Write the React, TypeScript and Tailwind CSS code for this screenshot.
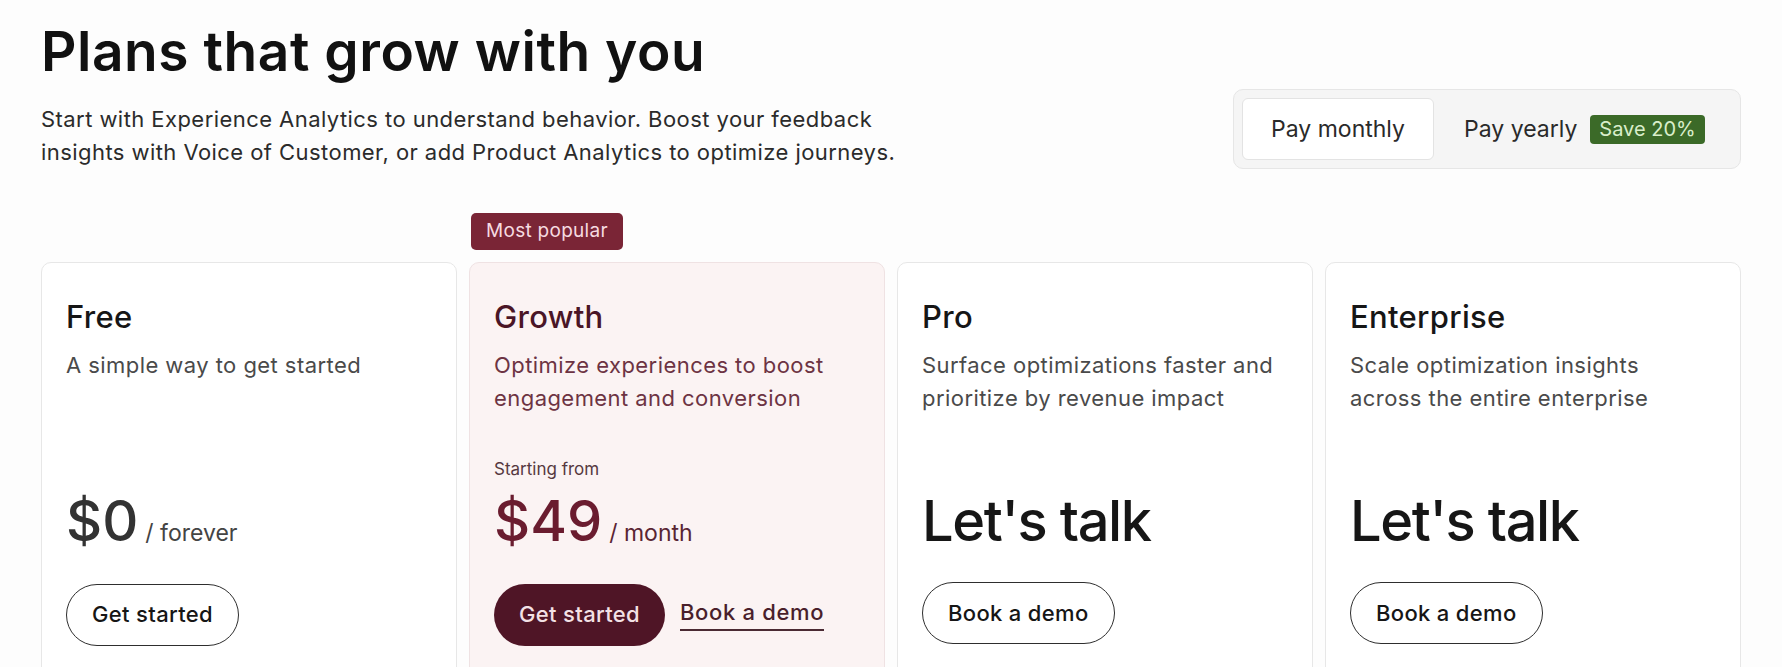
import React from "react";

type Plan = {
  name: string;
  desc: string[];
  starting?: string;
  price: string;
  unit?: string;
  highlight?: boolean;
  primary: string;
  primaryFilled?: boolean;
  link?: string;
};

const plans: Plan[] = [
  {
    name: "Free",
    desc: ["A simple way to get started"],
    price: "$0",
    unit: "/ forever",
    primary: "Get started",
  },
  {
    name: "Growth",
    desc: ["Optimize experiences to boost", "engagement and conversion"],
    starting: "Starting from",
    price: "$49",
    unit: "/ month",
    highlight: true,
    primary: "Get started",
    primaryFilled: true,
    link: "Book a demo",
  },
  {
    name: "Pro",
    desc: ["Surface optimizations faster and", "prioritize by revenue impact"],
    price: "Let's talk",
    primary: "Book a demo",
  },
  {
    name: "Enterprise",
    desc: ["Scale optimization insights", "across the entire enterprise"],
    price: "Let's talk",
    primary: "Book a demo",
  },
];

function PlanCard({ plan }: { plan: Plan }) {
  const hl = plan.highlight;
  return (
    <div className="flex flex-col">
      <div className="mb-3 h-[37px]">
        {hl && (
          <span className="ml-[2px] inline-flex h-[37px] items-center rounded-[5px] bg-[#7a2536] px-[15px] text-[19px] tracking-[0.015em] text-[#f6dbe0]">
            Most popular
          </span>
        )}
      </div>
      <div
        className={
          "min-h-[520px] rounded-[10px] border px-6 pt-[36px] pb-10 " +
          (hl ? "border-[#efe2e3] bg-[#fbf3f3]" : "border-[#e7e7e7] bg-white")
        }
      >
        <h2
          className={
            "text-[31px] leading-[36px] font-medium tracking-[0.01em] " +
            (hl ? "text-[#4a1526]" : "text-[#161616]")
          }
        >
          {plan.name}
        </h2>
        <p
          className={
            "mt-[14px] h-[66px] text-[22px] leading-[33px] tracking-[0.02em] " +
            (hl ? "text-[#6d3343]" : "text-[#4a4a4a]")
          }
        >
          {plan.desc.map((l, i) => (
            <span key={i} className="block">
              {l}
            </span>
          ))}
        </p>
        <div className="mt-[42px] h-[24px] text-[17px] leading-[24px] text-[#56393f]">
          {plan.starting ?? ""}
        </div>
        <div className="mt-3 flex items-baseline">
          <span
            className={
              "text-[56px] leading-[56px] font-medium " +
              (hl
                ? "text-[#6a1c2f]"
                : plan.unit
                ? "text-[#333333]"
                : "text-[#161616] tracking-[-0.025em]")
            }
          >
            {plan.price}
          </span>
          {plan.unit && (
            <span
              className={
                "ml-[7px] text-[23px] " +
                (hl ? "text-[#5a2533]" : "text-[#444444]")
              }
            >
              {plan.unit}
            </span>
          )}
        </div>
        <div className="mt-[33px] flex items-center gap-[15px]">
          {plan.primaryFilled ? (
            <button className="flex h-[62px] items-center rounded-full bg-[#4f1526] px-[25px] text-[22px] font-medium tracking-[0.015em] text-[#f3e1e5]">
              {plan.primary}
            </button>
          ) : (
            <button className="flex h-[62px] items-center rounded-full border-[1.5px] border-[#2e2e2e] px-[25px] text-[22px] font-medium tracking-[0.015em] text-[#161616]">
              {plan.primary}
            </button>
          )}
          {plan.link && (
            <a className="border-b-2 border-[#4a2a33] pb-[4px] text-[22px] leading-[26px] font-medium tracking-[0.03em] text-[#4a1f2b]">
              {plan.link}
            </a>
          )}
        </div>
      </div>
    </div>
  );
}

export default function App() {
  return (
    <div className="min-h-screen bg-[#fdfdfd] px-[41px] pt-[22px] pb-10 font-['Inter',sans-serif]">
      <div className="flex items-end justify-between">
        <div>
          <h1 className="text-[55px] leading-[58px] font-semibold tracking-[0.01em] text-[#111111]">
            Plans that grow with you
          </h1>
          <p className="mt-[23px] text-[22px] leading-[33px] tracking-[0.02em] text-[#2b2b2b]">
            Start with Experience Analytics to understand behavior. Boost your feedback
            <br />
            insights with Voice of Customer, or add Product Analytics to optimize journeys.
          </p>
        </div>
        <div className="flex h-[80px] w-[508px] items-center rounded-[10px] border border-[#e6e6e6] bg-[#f5f5f5] p-2">
          <div className="flex h-[62px] w-[192px] items-center justify-center rounded-[6px] border border-[#e3e3e3] bg-white text-[23px] text-[#2a2a2a]">
            Pay monthly
          </div>
          <div className="flex items-center gap-[13px] pl-[30px]">
            <span className="text-[23px] text-[#2a2a2a]">Pay yearly</span>
            <span className="inline-flex h-[29px] items-center rounded-[4px] bg-[#3b6a28] px-[9px] text-[20px] text-[#d9eecb]">
              Save 20%
            </span>
          </div>
        </div>
      </div>
      <div className="mt-[44px] grid grid-cols-4 gap-3">
        {plans.map((p) => (
          <PlanCard key={p.name} plan={p} />
        ))}
      </div>
    </div>
  );
}
